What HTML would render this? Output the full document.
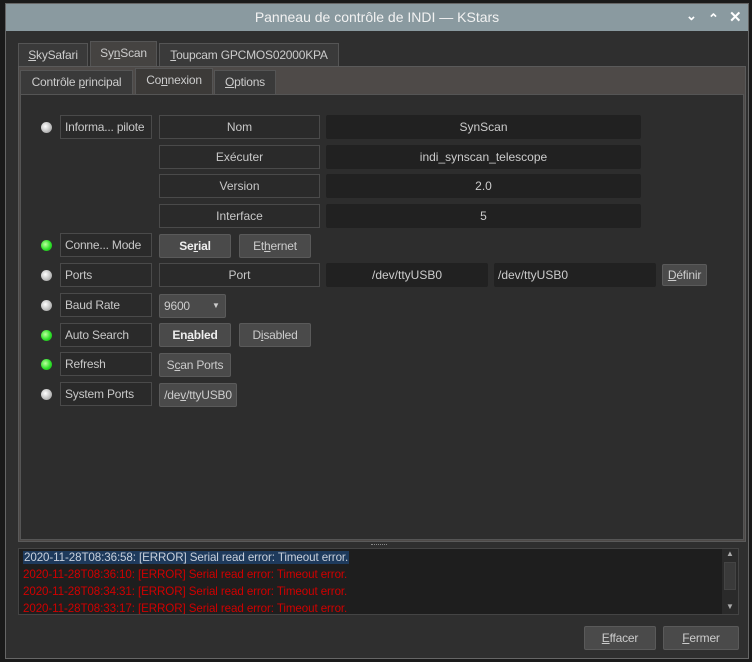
<!DOCTYPE html><html><head><style>
*{box-sizing:border-box;margin:0;padding:0}
body{width:752px;height:662px;background:#1a1a1a;font-family:"Liberation Sans",sans-serif;font-size:12px;color:#d0d0d0;position:relative;overflow:hidden}
.a{position:absolute;white-space:nowrap}
.win{left:5px;top:3px;width:744px;height:656px;background:#2f2f2f;border:1px solid #666}
.title{left:6px;top:4px;width:742px;height:27px;background:#8a9aa0;color:#f2f2f2;font-size:14px;text-align:center;line-height:27px}
.tab{background:#3a3a3a;border:1px solid #555;border-bottom:none;text-align:center;line-height:22px;color:#ccc;font-size:12px;letter-spacing:-0.2px}
.tab.s{background:#454341}
.lab{border:1px solid #4a4a4a;background:#2a2a2a;height:24px;line-height:22px;padding-left:4px;color:#c8c8c8;letter-spacing:-0.2px}
.cen{border:1px solid #4a4a4a;background:#2a2a2a;height:24px;line-height:22px;text-align:center;color:#c8c8c8}
.val{background:#212121;border-radius:2px;height:24px;line-height:24px;text-align:center;color:#ccc}
.btn{background:#4a4a4a;border:1px solid #5a5a5a;border-radius:2px;height:24px;line-height:22px;text-align:center;color:#ccc;letter-spacing:-0.2px}
.led{width:11px;height:11px;border-radius:50%;background:radial-gradient(circle at 40% 40%,#fff,#bbb 60%,#888)}
.g{background:radial-gradient(circle at 40% 40%,#bfffa0,#2ee02a 55%,#179a12)}
u{text-decoration:underline}
.log div{height:17px;line-height:17px;padding-left:4px;color:#d00000;white-space:nowrap;font-size:11.6px;letter-spacing:-0.1px}
</style></head><body>
<div class="a win"></div>
<div class="a title">Panneau de contrôle de INDI — KStars</div>
<div class="a" style="left:686px;top:8px;color:#fff;font-size:13px;font-weight:bold">&#8964;</div>
<div class="a" style="left:708px;top:11px;color:#fff;font-size:13px;font-weight:bold">&#8963;</div>
<div class="a" style="left:729px;top:8px;color:#fff;font-size:15px;font-weight:bold">✕</div>
<div class="a tab" style="left:18px;top:43px;width:70px;height:23px"><u>S</u>kySafari</div>
<div class="a tab s" style="left:90px;top:41px;width:67px;height:25px">Sy<u>n</u>Scan</div>
<div class="a tab" style="left:159px;top:43px;width:180px;height:23px"><u>T</u>oupcam GPCMOS02000KPA</div>
<div class="a" style="left:18px;top:66px;width:728px;height:476px;background:#4e4a48;border:1px solid #5a5a5a"></div>
<div class="a tab" style="left:20px;top:70px;width:113px;height:24px">Contrôle <u>p</u>rincipal</div>
<div class="a tab s" style="left:135px;top:68px;width:78px;height:26px;background:#3c3a38">Co<u>n</u>nexion</div>
<div class="a tab" style="left:214px;top:70px;width:62px;height:24px"><u>O</u>ptions</div>
<div class="a" style="left:20px;top:94px;width:724px;height:446px;background:#2d2d2d;border:1px solid #555"></div>

<div class="a led" style="left:41px;top:122px"></div>
<div class="a lab" style="left:60px;top:115px;width:92px">Informa... pilote</div>
<div class="a cen" style="left:159px;top:115px;width:161px">Nom</div>
<div class="a val" style="left:326px;top:115px;width:315px">SynScan</div>
<div class="a cen" style="left:159px;top:145px;width:161px">Exécuter</div>
<div class="a val" style="left:326px;top:145px;width:315px">indi_synscan_telescope</div>
<div class="a cen" style="left:159px;top:174px;width:161px">Version</div>
<div class="a val" style="left:326px;top:174px;width:315px">2.0</div>
<div class="a cen" style="left:159px;top:204px;width:161px">Interface</div>
<div class="a val" style="left:326px;top:204px;width:315px">5</div>

<div class="a led g" style="left:41px;top:240px"></div>
<div class="a lab" style="left:60px;top:233px;width:92px">Conne... Mode</div>
<div class="a btn" style="left:159px;top:234px;width:72px;font-weight:bold;color:#eee">Se<u>r</u>ial</div>
<div class="a btn" style="left:239px;top:234px;width:72px">Et<u>h</u>ernet</div>

<div class="a led" style="left:41px;top:270px"></div>
<div class="a lab" style="left:60px;top:263px;width:92px">Ports</div>
<div class="a cen" style="left:159px;top:263px;width:161px">Port</div>
<div class="a val" style="left:326px;top:263px;width:162px">/dev/ttyUSB0</div>
<div class="a val" style="left:494px;top:263px;width:162px;text-align:left;padding-left:4px">/dev/ttyUSB0</div>
<div class="a btn" style="left:662px;top:264px;width:45px;height:22px;line-height:20px"><u>D</u>éfinir</div>

<div class="a led" style="left:41px;top:300px"></div>
<div class="a lab" style="left:60px;top:293px;width:92px">Baud Rate</div>
<div class="a btn" style="left:159px;top:294px;width:67px;text-align:left;padding-left:4px">9600<span style="position:absolute;left:52px;top:0;font-size:8px">▼</span></div>

<div class="a led g" style="left:41px;top:330px"></div>
<div class="a lab" style="left:60px;top:323px;width:92px">Auto Search</div>
<div class="a btn" style="left:159px;top:323px;width:72px;font-weight:bold;color:#eee">En<u>a</u>bled</div>
<div class="a btn" style="left:239px;top:323px;width:72px">D<u>i</u>sabled</div>

<div class="a led g" style="left:41px;top:359px"></div>
<div class="a lab" style="left:60px;top:352px;width:92px">Refresh</div>
<div class="a btn" style="left:159px;top:353px;width:72px">S<u>c</u>an Ports</div>

<div class="a led" style="left:41px;top:389px"></div>
<div class="a lab" style="left:60px;top:382px;width:92px">System Ports</div>
<div class="a btn" style="left:159px;top:383px;width:78px">/de<u>v</u>/ttyUSB0</div>

<div class="a" style="left:371px;top:544px;width:16px;height:2px;border-top:1px dotted #888"></div>
<div class="a log" style="left:18px;top:548px;width:721px;height:67px;background:#1e1e1e;border:1px solid #444;overflow:hidden">
<div style="color:#c8d0dc"><span style="background:#1e3a5c;padding:0 1px">2020-11-28T08:36:58: [ERROR] Serial read error: Timeout error.</span></div>
<div>2020-11-28T08:36:10: [ERROR] Serial read error: Timeout error.</div>
<div>2020-11-28T08:34:31: [ERROR] Serial read error: Timeout error.</div>
<div>2020-11-28T08:33:17: [ERROR] Serial read error: Timeout error.</div>
</div>
<div class="a" style="left:722px;top:549px;width:16px;height:65px;background:#2a2a2a"></div>
<div class="a" style="left:724px;top:562px;width:12px;height:28px;background:#3a3a3a;border:1px solid #444"></div>
<div class="a" style="left:726px;top:549px;font-size:8px;color:#aaa">▲</div>
<div class="a" style="left:726px;top:602px;font-size:8px;color:#aaa">▼</div>

<div class="a btn" style="left:584px;top:626px;width:72px;height:24px;line-height:22px"><u>E</u>ffacer</div>
<div class="a btn" style="left:663px;top:626px;width:76px;height:24px;line-height:22px"><u>F</u>ermer</div>
</body></html>
